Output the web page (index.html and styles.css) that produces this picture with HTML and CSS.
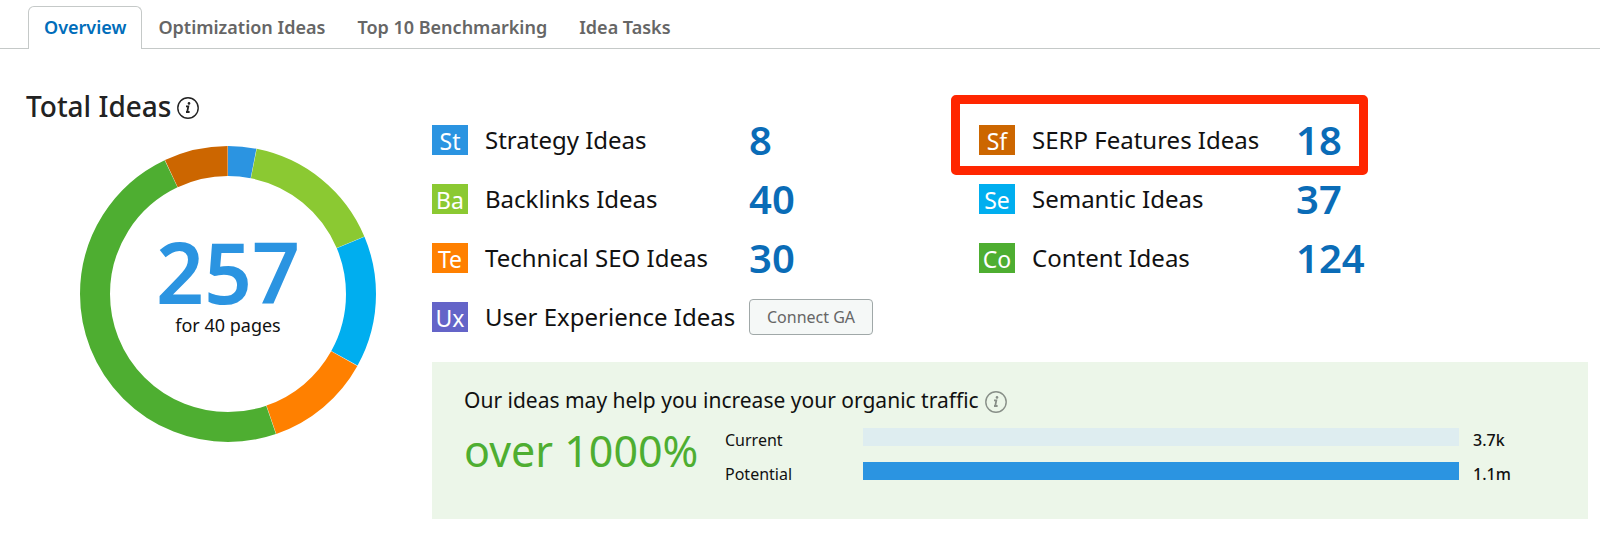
FILE: index.html
```
<!DOCTYPE html>
<html lang="en">
<head>
<meta charset="UTF-8">
<meta name="viewport" content="width=device-width, initial-scale=1.0">
<title>Total Ideas</title>
<link rel="stylesheet" href="styles.css">
</head>
<body>
<nav class="tabs">
    <a class="tab active" href="#overview">Overview</a>
    <a class="tab" href="#optimization">Optimization Ideas</a>
    <a class="tab" href="#benchmarking">Top 10 Benchmarking</a>
    <a class="tab" href="#tasks">Idea Tasks</a>
</nav>
<main class="content">
    <section class="total">
        <h1>Total Ideas
            <svg class="info" viewBox="0 0 22 22" aria-hidden="true">
                <circle cx="11" cy="11" r="10.2"/>
                <path class="stem" d="M9 9.4h2.3L10.2 15h2.4M9 15h1.2"/>
                <circle class="dot" cx="12" cy="6.4" r="1.3"/>
            </svg>
        </h1>
        <div class="donut">
            <svg class="ring" viewBox="0 0 296 296" aria-hidden="true">
                <g transform="rotate(-90 148 148)">
                    <circle class="st" cx="148" cy="148" r="133" pathLength="257" stroke-dasharray="7.9 249.1" stroke-dashoffset="0"/>
                    <circle class="ba" cx="148" cy="148" r="133" pathLength="257" stroke-dasharray="39.9 217.1" stroke-dashoffset="-8"/>
                    <circle class="se" cx="148" cy="148" r="133" pathLength="257" stroke-dasharray="36.9 220.1" stroke-dashoffset="-48"/>
                    <circle class="te" cx="148" cy="148" r="133" pathLength="257" stroke-dasharray="29.9 227.1" stroke-dashoffset="-85"/>
                    <circle class="co" cx="148" cy="148" r="133" pathLength="257" stroke-dasharray="123.9 133.1" stroke-dashoffset="-115"/>
                    <circle class="sf" cx="148" cy="148" r="133" pathLength="257" stroke-dasharray="17.9 239.1" stroke-dashoffset="-239"/>
                </g>
            </svg>
            <div class="donut-text">
                <strong>257</strong>
                <span>for 40 pages</span>
            </div>
        </div>
    </section>
    <section class="details">
        <div class="ideas">
            <ul>
                <li><span class="badge st">St</span><span class="name">Strategy Ideas</span><a class="count" href="#strategy">8</a></li>
                <li><span class="badge ba">Ba</span><span class="name">Backlinks Ideas</span><a class="count" href="#backlinks">40</a></li>
                <li><span class="badge te">Te</span><span class="name">Technical SEO Ideas</span><a class="count" href="#technical">30</a></li>
                <li><span class="badge ux">Ux</span><span class="name">User Experience Ideas</span><button type="button">Connect GA</button></li>
            </ul>
            <ul>
                <li class="marked"><span class="badge sf">Sf</span><span class="name">SERP Features Ideas</span><a class="count" href="#serp">18</a></li>
                <li><span class="badge se">Se</span><span class="name">Semantic Ideas</span><a class="count" href="#semantic">37</a></li>
                <li><span class="badge co">Co</span><span class="name">Content Ideas</span><a class="count" href="#content">124</a></li>
            </ul>
        </div>
        <div class="traffic">
            <h2>Our ideas may help you increase your organic traffic
                <svg class="info" viewBox="0 0 22 22" aria-hidden="true">
                    <circle cx="11" cy="11" r="10.2"/>
                    <path class="stem" d="M9 9.4h2.3L10.2 15h2.4M9 15h1.2"/>
                    <circle class="dot" cx="12" cy="6.4" r="1.3"/>
                </svg>
            </h2>
            <div class="growth">
                <div class="percent">over 1000%</div>
                <div class="bars">
                    <span>Current</span><div class="bar"></div><span class="value">3.7k</span>
                    <span>Potential</span><div class="bar potential"></div><span class="value">1.1m</span>
                </div>
            </div>
        </div>
    </section>
</main>
</body>
</html>
```
FILE: styles.css
```
*,
*::after {
    box-sizing: border-box;
}
body {
    margin: 0;
    background: #fff;
    color: #111;
    font-family: "Noto Sans", "Open Sans", sans-serif;
}
.tabs {
    display: flex;
    padding: 6px 28px 0;
    border-bottom: 1px solid #c5c9c8;
}
.tab {
    height: 43px;
    margin-bottom: -1px;
    padding: 0 15px;
    border: 1px solid transparent;
    border-bottom: 0;
    border-radius: 6px 6px 0 0;
    color: #666;
    font-size: 18px;
    font-weight: 600;
    line-height: 40px;
    text-decoration: none;
}
.tab.active {
    border-color: #c5c9c8;
    background: #fff;
    color: #006dba;
}
.content {
    display: flex;
    padding: 37px 12px 0 26px;
}
.total {
    flex: 0 0 406px;
}
h1 {
    display: flex;
    align-items: center;
    gap: 6px;
    margin: 0;
    color: #222;
    font-size: 28px;
    font-weight: 500;
    line-height: 40px;
}
.info {
    width: 22px;
    height: 22px;
    margin-top: 4px;
    fill: none;
    stroke: currentColor;
    stroke-width: 1.4;
}
.info .stem {
    stroke-width: 1.8;
}
.info .dot {
    fill: currentColor;
    stroke: none;
}
.donut {
    display: grid;
    width: 296px;
    margin: 20px 0 0 54px;
}
.ring,
.donut-text {
    grid-area: 1 / 1;
}
.ring {
    display: block;
    width: 100%;
    fill: none;
    stroke-width: 30;
}
.ring .st { stroke: #2b94e1; }
.ring .ba { stroke: #8bc932; }
.ring .se { stroke: #00aeef; }
.ring .te { stroke: #ff8000; }
.ring .co { stroke: #4eae31; }
.ring .sf { stroke: #cc6600; }
.donut-text {
    display: flex;
    flex-direction: column;
    align-items: center;
    padding-top: 84px;
}
.donut-text strong {
    color: #2b94e1;
    font-size: 84px;
    font-weight: 600;
    line-height: 83px;
}
.donut-text span {
    font-size: 18px;
    line-height: 24px;
}
.details {
    flex: 1;
    min-width: 0;
    padding-top: 24px;
}
.ideas {
    display: grid;
    grid-template-columns: 1fr 1fr;
    padding-right: 62px;
}
ul {
    margin: 0;
    padding: 0;
    list-style: none;
}
li {
    position: relative;
    display: flex;
    align-items: center;
    height: 59px;
}
.badge {
    width: 36px;
    height: 30px;
    margin-right: 17px;
    color: #fff;
    font-size: 23px;
    line-height: 32px;
    text-align: center;
}
.badge.st { background: #2b94e1; }
.badge.ba { background: #8bc932; }
.badge.te { background: #ff8000; }
.badge.ux { background: #6464c8; }
.badge.sf { background: #cc6600; }
.badge.se { background: #00aeef; }
.badge.co { background: #4eae31; }
.name {
    width: 264px;
    font-size: 24px;
    white-space: nowrap;
}
.count {
    color: #0a6cb7;
    font-size: 40px;
    font-weight: 600;
    line-height: 56px;
    text-decoration: none;
}
li button {
    width: 124px;
    height: 36px;
    padding: 0;
    border: 1px solid #a0a8a8;
    border-radius: 4px;
    background: #f5f8f7;
    color: #666;
    font-family: inherit;
    font-size: 16px;
}
/* frame drawn around the highlighted row */
.marked::after {
    content: "";
    position: absolute;
    top: -15px;
    left: -28px;
    width: 417px;
    height: 80px;
    border: 9px solid #ff2600;
    border-radius: 5px;
}
.traffic {
    margin-top: 16px;
    padding: 22px 32px 23px;
    background: #ecf6e9;
}
h2 {
    display: flex;
    align-items: center;
    gap: 6px;
    margin: 0;
    font-size: 21px;
    font-weight: 400;
    line-height: 32px;
}
h2 .info {
    color: #888f88;
}
.growth {
    display: flex;
}
.percent {
    flex: 0 0 261px;
    color: #4eae31;
    font-size: 43px;
    line-height: 70px;
}
.bars {
    display: grid;
    flex: 1;
    grid-template-columns: 138px 1fr 97px;
    grid-auto-rows: 34px;
    padding-top: 12px;
    font-size: 16px;
    line-height: 24px;
}
.bar {
    height: 18px;
    background: #deedf0;
}
.bar.potential {
    background: #2b94e1;
}
.value {
    padding-left: 14px;
    font-weight: 500;
}
```
